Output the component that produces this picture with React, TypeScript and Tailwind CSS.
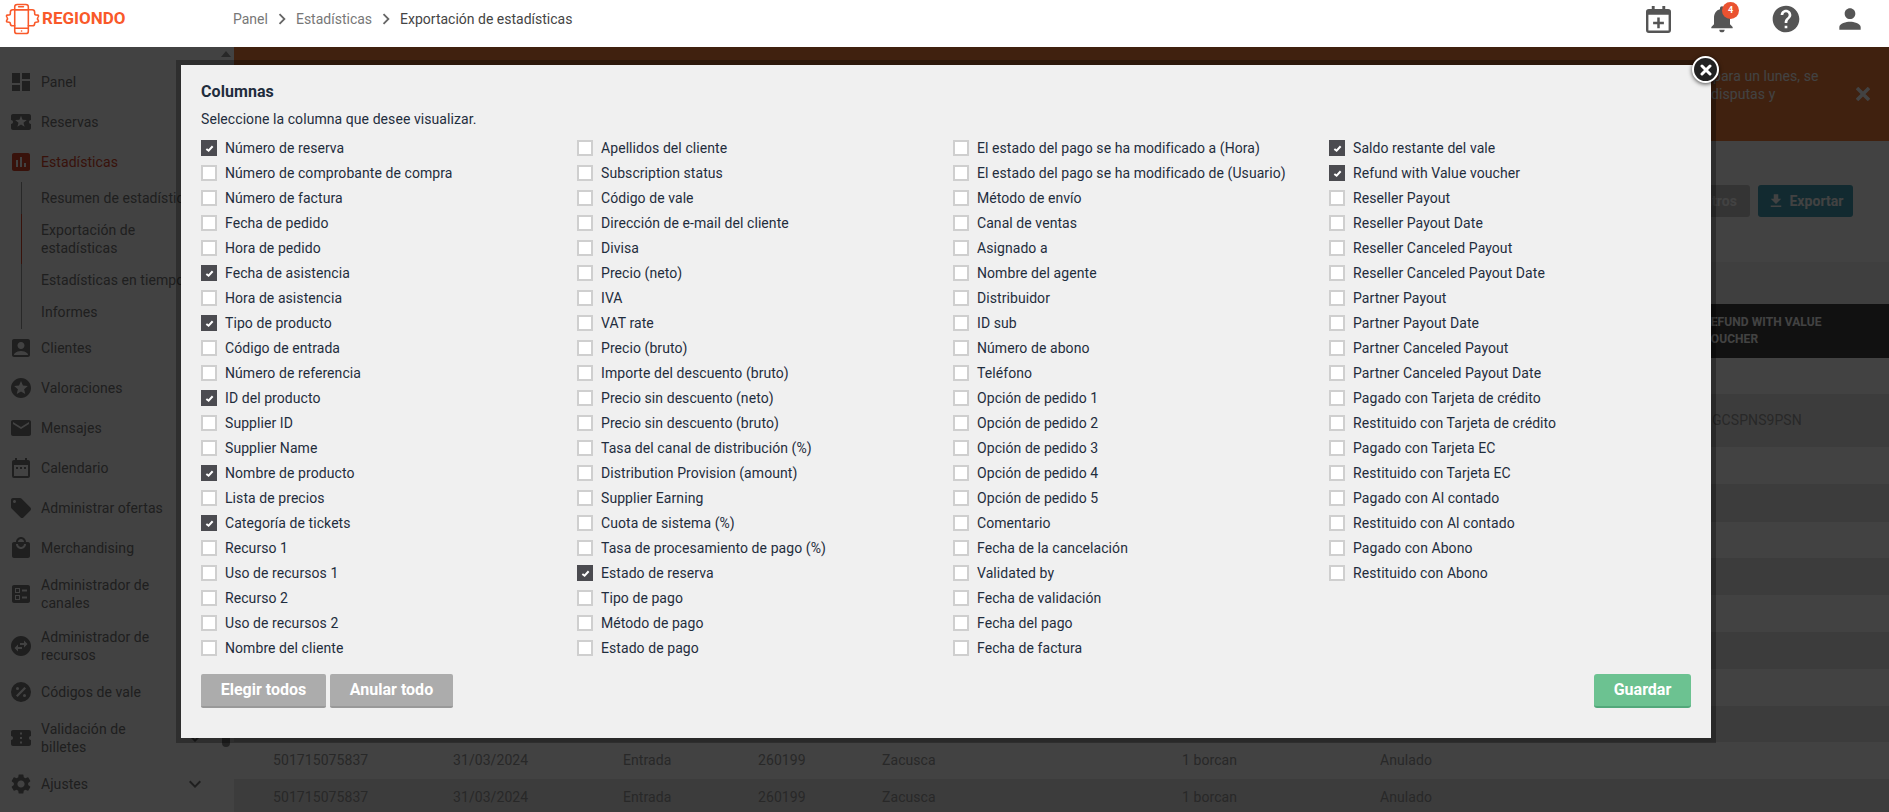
import React from "react";
import {
  MdDashboard, MdLocalActivity, MdAssessment, MdAccountBox, MdStars, MdEmail, MdDateRange, MdLocalOffer,
  MdLocalMall, MdBallot, MdSwapHorizontalCircle, MdConfirmationNumber, MdSettings, MdChevronRight,
  MdExpandMore, MdNotifications, MdHelp, MdPerson, MdFileDownload,
} from "react-icons/md";

const col1: [string, boolean][] = [
  ["Número de reserva", true], ["Número de comprobante de compra", false], ["Número de factura", false],
  ["Fecha de pedido", false], ["Hora de pedido", false], ["Fecha de asistencia", true], ["Hora de asistencia", false],
  ["Tipo de producto", true], ["Código de entrada", false], ["Número de referencia", false], ["ID del producto", true],
  ["Supplier ID", false], ["Supplier Name", false], ["Nombre de producto", true], ["Lista de precios", false],
  ["Categoría de tickets", true], ["Recurso 1", false], ["Uso de recursos 1", false], ["Recurso 2", false],
  ["Uso de recursos 2", false], ["Nombre del cliente", false],
];
const col2: [string, boolean][] = [
  ["Apellidos del cliente", false], ["Subscription status", false], ["Código de vale", false],
  ["Dirección de e-mail del cliente", false], ["Divisa", false], ["Precio (neto)", false], ["IVA", false],
  ["VAT rate", false], ["Precio (bruto)", false], ["Importe del descuento (bruto)", false],
  ["Precio sin descuento (neto)", false], ["Precio sin descuento (bruto)", false],
  ["Tasa del canal de distribución (%)", false], ["Distribution Provision (amount)", false], ["Supplier Earning", false],
  ["Cuota de sistema (%)", false], ["Tasa de procesamiento de pago (%)", false], ["Estado de reserva", true],
  ["Tipo de pago", false], ["Método de pago", false], ["Estado de pago", false],
];
const col3: [string, boolean][] = [
  ["El estado del pago se ha modificado a (Hora)", false], ["El estado del pago se ha modificado de (Usuario)", false],
  ["Método de envío", false], ["Canal de ventas", false], ["Asignado a", false], ["Nombre del agente", false],
  ["Distribuidor", false], ["ID sub", false], ["Número de abono", false], ["Teléfono", false],
  ["Opción de pedido 1", false], ["Opción de pedido 2", false], ["Opción de pedido 3", false],
  ["Opción de pedido 4", false], ["Opción de pedido 5", false], ["Comentario", false], ["Fecha de la cancelación", false],
  ["Validated by", false], ["Fecha de validación", false], ["Fecha del pago", false], ["Fecha de factura", false],
];
const col4: [string, boolean][] = [
  ["Saldo restante del vale", true], ["Refund with Value voucher", true], ["Reseller Payout", false],
  ["Reseller Payout Date", false], ["Reseller Canceled Payout", false], ["Reseller Canceled Payout Date", false],
  ["Partner Payout", false], ["Partner Payout Date", false], ["Partner Canceled Payout", false],
  ["Partner Canceled Payout Date", false], ["Pagado con Tarjeta de crédito", false],
  ["Restituido con Tarjeta de crédito", false], ["Pagado con Tarjeta EC", false], ["Restituido con Tarjeta EC", false],
  ["Pagado con Al contado", false], ["Restituido con Al contado", false], ["Pagado con Abono", false],
  ["Restituido con Abono", false],
];

function Check({ label, on }: { label: string; on: boolean }) {
  return (
    <div className="flex h-[25px] items-center gap-2 whitespace-nowrap pb-[1px]">
      {on ? (
        <span className="flex h-4 w-4 items-center justify-center bg-[#4b4b50]">
          <svg viewBox="0 0 10 10" width="9" height="9" fill="none" stroke="#fff" strokeWidth="2.200">
            <path d="M1.500 5.500 4 7.500 8.500 2.500" />
          </svg>
        </span>
      ) : (
        <span className="h-4 w-4 border-[2px] border-[#cfcfcf] bg-white" />
      )}
      <span>{label}</span>
    </div>
  );
}

function Item({ icon, children, chevron, className }: { icon: React.ReactNode; children: React.ReactNode; chevron?: boolean; className: string }) {
  return (
    <div className={"flex items-center pl-[9px] pr-[27px] " + className}>
      <span className="flex w-[32px] shrink-0">{icon}</span>
      <span className="flex-1 leading-[18px]">{children}</span>
      {chevron && <MdExpandMore size={24} className="text-[#777]" />}
    </div>
  );
}

function PercentCircle() {
  return (
    <svg viewBox="0 0 24 24" width="24" height="24" fill="currentColor">
      <path fillRule="evenodd" d="M12 2a10 10 0 1 0 0 20 10 10 0 0 0 0-20zM8.500 7a1.500 1.500 0 1 1 0 3 1.500 1.500 0 0 1 0-3zm7 10a1.500 1.500 0 1 1 0-3 1.500 1.500 0 0 1 0 3zM8.600 17 7 15.400l8.400-8.400L17 8.600 8.600 17z" />
    </svg>
  );
}

function Logo() {
  return (
    <svg viewBox="0 0 36 32" width="35" height="32" fill="none" stroke="#f9592a" strokeWidth="1.600" strokeLinejoin="round" strokeLinecap="round">
      <rect x="10" y="1" width="14" height="30" rx="2.500" />
      <path d="M14 3.400h5M17 28.300h.1M10 25.500h14" />
      <path d="M24 6.500H8a2.500 2.500 0 0 0-2.500 2.500v1.500c0 1.500-1.500 1.500-3 1.500-1.200 0-1.200 1-.6 1.800.8 1 .8 2.400 0 3.400-.6.800-.6 1.800.6 1.800 1.500 0 3 0 3 1.500 0 1.500 1 2.500 2.500 2.500h2" />
      <path d="M10 6.500h18a2.500 2.500 0 0 1 2.500 2.500v1.500c0 1.500 1.500 1.500 3 1.500 1.200 0 1.200 1 .6 1.800-.8 1-.8 2.400 0 3.400.6.800.6 1.800-.6 1.800-1.500 0-3 0-3 1.500 0 1.500-1 2.500-2.500 2.500h-4" />
    </svg>
  );
}

function CalendarPlus() {
  return (
    <svg viewBox="0 0 26 28" width="25" height="27" fill="#555">
      <path fillRule="evenodd" d="M6 0h3v3h8V0h3v3h3a3 3 0 0 1 3 3v19a3 3 0 0 1-3 3H3a3 3 0 0 1-3-3V6a3 3 0 0 1 3-3h3V0zM2.500 9v16.500h21V9h-21z" />
      <path d="M11.700 12h2.600v4.300h4.300v2.600h-4.300v4.300h-2.600v-4.300H7.400v-2.600h4.300z" />
    </svg>
  );
}

const rowText = (
  <>
    <span className="w-[180px]">501715075837</span>
    <span className="w-[170px]">31/03/2024</span>
    <span className="w-[135px]">Entrada</span>
    <span className="w-[124px]">260199</span>
    <span className="w-[300px]">Zacusca</span>
    <span className="w-[198px]">1 borcan</span>
    <span>Anulado</span>
  </>
);

export default function App() {
  return (
    <div className="flex h-[812px] w-[1889px] flex-col overflow-hidden bg-white font-['Roboto',sans-serif] text-[14px] tracking-[0.07px]">
      <header className="flex h-[47px] shrink-0 items-center bg-white pb-[9px]">
        <div className="flex w-[233px] items-center gap-[2px] pl-[5px]">
          <Logo />
          <span className="text-[17px] font-bold tracking-normal text-[#f9592a]">REGIONDO</span>
        </div>
        <nav className="flex items-center text-[14px] tracking-normal text-[#777]">
          <span>Panel</span>
          <MdChevronRight size={22} className="mx-[3px] text-[#666]" />
          <span>Estadísticas</span>
          <MdChevronRight size={22} className="mx-[3px] text-[#666]" />
          <span className="text-[#444]">Exportación de estadísticas</span>
        </nav>
        <div className="ml-auto flex items-center pr-[7px] text-[#555]">
          <div className="flex w-[64px] justify-center"><CalendarPlus /></div>
          <div className="relative flex w-[64px] justify-center">
            <MdNotifications size={32} />
            <span className="absolute left-[32px] top-[-1px] flex h-[17px] w-[17px] items-center justify-center rounded-full bg-[#ea5230] text-[9px] font-bold text-white">4</span>
          </div>
          <div className="flex w-[64px] justify-center"><MdHelp size={32} /></div>
          <div className="flex w-[64px] justify-center"><MdPerson size={32} /></div>
        </div>
      </header>

      <div className="relative flex min-h-0 flex-1">
        <aside className="relative w-[234px] shrink-0 bg-white text-[#777]">
          <div className="flex flex-col">
            <Item className="mt-[22px] h-[26px]" icon={<MdDashboard size={24} />}>Panel</Item>
            <Item className="mt-[14px] h-[26px]" icon={<MdLocalActivity size={24} />}>Reservas</Item>
            <Item className="mt-[14px] h-[26px] text-[#d9472b]" icon={<MdAssessment size={24} />}>Estadísticas</Item>
            <div className="ml-[21px] mt-[7px] flex h-[147px] flex-col border-l border-[#999] pl-[19px]">
              <div className="flex h-[32px] items-center whitespace-nowrap">Resumen de estadísticas</div>
              <div className="-ml-[20px] flex h-[50px] items-center border-l border-[#d9472b] pb-[1px] pl-[19px] leading-[18px]">Exportación de<br />estadísticas</div>
              <div className="flex h-[32px] items-center whitespace-nowrap">Estadísticas en tiempo real</div>
              <div className="flex h-[33px] items-center">Informes</div>
            </div>
            <Item className="mt-[6px] h-[26px]" icon={<MdAccountBox size={24} />}>Clientes</Item>
            <Item className="mt-[14px] h-[26px]" icon={<MdStars size={24} />}>Valoraciones</Item>
            <Item className="mt-[14px] h-[26px]" icon={<MdEmail size={24} />}>Mensajes</Item>
            <Item className="mt-[14px] h-[26px]" icon={<MdDateRange size={24} />}>Calendario</Item>
            <Item className="mt-[14px] h-[26px]" icon={<MdLocalOffer size={24} />}>Administrar ofertas</Item>
            <Item className="mt-[14px] h-[26px]" icon={<MdLocalMall size={24} />}>Merchandising</Item>
            <Item className="mt-[15px] h-[36px]" icon={<MdBallot size={24} />}>Administrador de<br />canales</Item>
            <Item className="mt-[16px] h-[36px]" icon={<MdSwapHorizontalCircle size={24} />}>Administrador de<br />recursos</Item>
            <Item className="mt-[15px] h-[26px]" icon={<PercentCircle />}>Códigos de vale</Item>
            <Item chevron className="mt-[15px] h-[36px]" icon={<MdConfirmationNumber size={24} />}>Validación de<br />billetes</Item>
            <Item chevron className="mt-[15px] h-[26px]" icon={<MdSettings size={24} />}>Ajustes</Item>
          </div>
          <div className="absolute left-[221px] top-[4px] h-0 w-0 border-x-[5px] border-b-[6px] border-x-transparent border-b-[#999]" />
          <div className="absolute bottom-[65px] left-[222px] top-[180px] w-[8px] rounded-full bg-[#888]" />
        </aside>

        <main className="min-w-0 flex-1 bg-white text-[#9a9a9a]">
          <div className="relative h-[94px] bg-[#f67f3a] pl-[1479px] pt-[20px] text-white">
            <p className="leading-[18px]">para un lunes, se<span className="-ml-[2px] block">disputas y</span></p>
            <svg viewBox="0 0 14 14" width="14" height="14" fill="none" stroke="#fff" strokeWidth="3.500" className="absolute right-[19px] top-[40px]">
              <path d="M1 1l12 12M13 1 1 13" />
            </svg>
          </div>
          <div className="flex h-[121px] items-start justify-end gap-2 px-[36px] pt-[44px] font-bold text-white">
            <div className="flex h-[32px] w-[140px] items-center justify-end rounded-[3px] bg-[#c8c8c8] pr-[13px]">Filtros</div>
            <div className="flex h-[32px] w-[95px] items-center justify-center gap-[4px] rounded-[3px] bg-[#46a2b9]"><MdFileDownload size={18} />Exportar</div>
          </div>
          <div className="h-[42px] bg-[#f2f2f2]" />
          <div className="flex h-[54px] items-center bg-[#414141] pl-[1469px] text-[12px] font-bold uppercase leading-[17px] text-white">
            <span className="w-[170px]">Refund with value voucher</span>
          </div>
          <div className="h-[36px] bg-white" />
          <div className="flex h-[53px] items-center bg-[#e8e8e8] pl-[1478px]">GCSPNS9PSN</div>
          <div className="h-[37px] bg-white" />
          <div className="h-[38px] bg-[#e8e8e8]" />
          <div className="h-[36px] bg-white" />
          <div className="h-[37px] bg-[#e8e8e8]" />
          <div className="h-[37px] bg-white" />
          <div className="h-[37px] bg-[#e8e8e8]" />
          <div className="h-[37px] bg-white" />
          <div className="h-[36px] bg-[#e8e8e8]" />
          <div className="flex h-[37px] items-center bg-white pl-[39px]">{rowText}</div>
          <div className="flex h-[37px] items-center bg-[#e8e8e8] pl-[39px]">{rowText}</div>
        </main>

        <div className="absolute inset-0 bg-black/[.74]" />

        <div className="absolute left-[176px] top-[13px] h-[683px] w-[1540px] border-[5px] border-black/30 bg-[#f0f0f0] bg-clip-padding px-[20px] pt-[15px] text-[#1f2d3d]">
          <h2 className="text-[16px] font-bold leading-[24px]">Columnas</h2>
          <p className="mt-[5px] leading-[20px]">Seleccione la columna que desee visualizar.</p>
          <div className="mt-[7px] flex">
            {[col1, col2, col3, col4].map((col, i) => (
              <div key={i} className="w-[376px] shrink-0">
                {col.map(([label, on]) => <Check key={label} label={label} on={on} />)}
              </div>
            ))}
          </div>
          <div className="mt-[13px] flex items-start gap-[4px] text-[16px] font-bold tracking-normal text-white">
            <button className="h-[34px] w-[125px] rounded-[2px] border-b-2 border-[#999] bg-[#acacac]">Elegir todos</button>
            <button className="h-[34px] w-[123px] rounded-[2px] border-b-2 border-[#999] bg-[#acacac]">Anular todo</button>
            <button className="ml-auto h-[34px] w-[97px] rounded-[3px] border-b-2 border-[#52a87a] bg-[#6cc291]">Guardar</button>
          </div>
        </div>

        <button className="absolute left-[1692px] top-[9px] flex h-[27px] w-[27px] items-center justify-center rounded-full border-2 border-white bg-[#222] shadow-[0_1px_4px_rgba(0,0,0,0.7)]">
          <svg viewBox="0 0 12 12" width="12" height="12" fill="none" stroke="#fff" strokeWidth="3" strokeLinecap="round">
            <path d="M2 2l8 8M10 2l-8 8" />
          </svg>
        </button>
      </div>
    </div>
  );
}
